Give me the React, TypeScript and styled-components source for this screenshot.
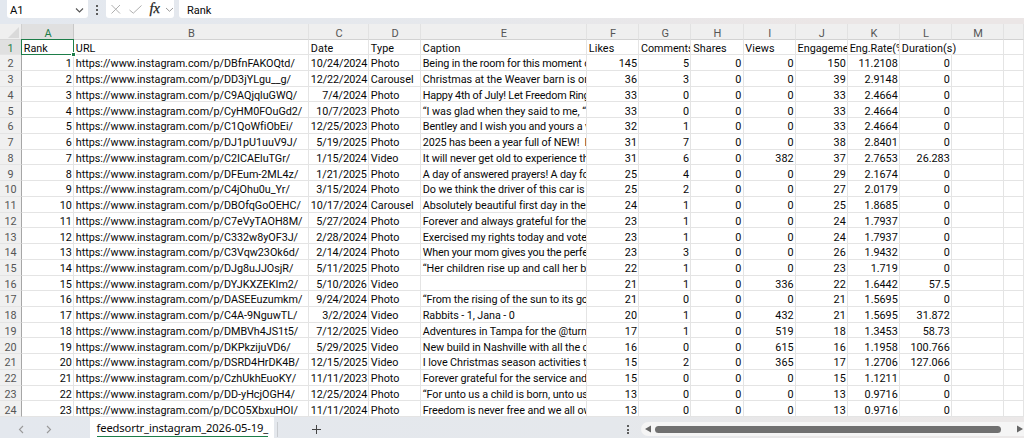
import React from "react";
import styled, { createGlobalStyle } from "styled-components";

const GlobalStyle = createGlobalStyle`
  * { box-sizing: border-box; }
  body { margin: 0; background: #fff; overflow: hidden; }
`;

const SHEET_FONT = `Roboto, "Liberation Sans", sans-serif`;
const UI_FONT = `"Noto Sans", "Open Sans", sans-serif`;
const COLUMNS = "52px 235px 60px 52px 166px 52.2px 52.2px 52.2px 52.2px 52.2px 52px 52px 52px 1fr";

const Workbook = styled.div`
  width: 1024px;
  height: 438px;
  display: flex;
  flex-direction: column;
  overflow: hidden;
  font-family: ${SHEET_FONT};
  color: #080808;
`;

const FormulaBar = styled.header`
  flex: 0 0 24px;
  display: flex;
  align-items: flex-start;
  padding-left: 7px;
  background: linear-gradient(90deg, #e3e8ef 0%, #e6e8ec 45%, #ebe6e6 80%, #ebe6e6 100%);
  font-size: 11px;
`;

const NameBox = styled.div`
  width: 81px;
  height: 18px;
  padding: 2px 4px 0 3px;
  display: flex;
  align-items: center;
  justify-content: space-between;
  background: #fff;
  border-radius: 0 0 3px 3px;
  letter-spacing: -0.2px;
  font-size: 11.3px;
`;

const Grip = styled.div`
  width: 17.5px;
  height: 19px;
  display: flex;
  flex-direction: column;
  align-items: center;
  justify-content: center;
  gap: 2px;
`;

const Dot = styled.i`
  width: 2px;
  height: 2px;
  background: #5c5c5c;
`;

const FormulaTools = styled.div`
  width: 68.5px;
  height: 18px;
  display: flex;
  align-items: center;
  background: #fff;
  border-radius: 0 0 3px 3px;
`;

const FormulaInput = styled.div`
  flex: 1;
  height: 18px;
  margin-left: 5px;
  padding: 2px 0 0 8px;
  display: flex;
  align-items: center;
  background: #fff;
  border-radius: 0 0 0 3px;
`;

const Sheet = styled.main`
  flex: 0 0 393.4px;
  display: flex;
  flex-direction: column;
  overflow: hidden;
  background: #fff;
`;

const Row = styled.div`
  flex: 0 0 15.745px;
  height: 15.745px;
  display: flex;
`;

const HeaderRow = styled(Row)`
  flex-basis: 15.5px;
  height: 15.5px;
  background: #efefef;
`;

const Corner = styled.div`
  width: 22px;
  display: flex;
  align-items: flex-end;
  justify-content: flex-end;
  padding: 0 2px 1px 0;
  border-right: 1px solid #d0d0d0;
  border-bottom: 1px solid #d6d6d6;
`;

const Cells = styled.div`
  flex: 1;
  display: grid;
  grid-template-columns: ${COLUMNS};
  grid-template-rows: 100%;
`;

const ColumnHead = styled.div<{ $active?: boolean }>`
  display: flex;
  align-items: center;
  justify-content: center;
  padding: 4px 0 0 1px;
  font-size: 11px;
  line-height: 11px;
  color: ${(p) => (p.$active ? "#1d7d49" : "#555")};
  background: ${(p) => (p.$active ? "#e0e0e0" : "transparent")};
  border-right: 1px solid ${(p) => (p.$active ? "#c8c8c8" : "#e2e2e2")};
  border-bottom: 1px solid #d2d2d2;
`;

const RowHead = styled.div<{ $active?: boolean }>`
  width: 22px;
  display: flex;
  align-items: flex-start;
  justify-content: center;
  padding-top: 3.2px;
  font-size: 10.8px;
  line-height: 12.7px;
  color: ${(p) => (p.$active ? "#1d7d49" : "#555")};
  background: ${(p) => (p.$active ? "#e0e0e0" : "#f0f0f0")};
  border-right: 1px solid #a6a6a6;
  border-bottom: 1px solid #e4e4e4;
`;

const Cell = styled.div<{ $right?: boolean; $spill?: boolean; $track?: number }>`
  min-width: 0;
  padding: 3.2px 1.2px 0 1.8px;
  overflow: ${(p) => (p.$spill ? "visible" : "hidden")};
  white-space: pre;
  text-align: ${(p) => (p.$right ? "right" : "left")};
  font-size: 10.8px;
  line-height: 12.7px;
  letter-spacing: ${(p) => p.$track ?? 0}px;
  border-right: 1px solid ${(p) => (p.$spill ? "transparent" : "#e4e4e4")};
  border-bottom: 1px solid #e4e4e4;
`;

const SelectedCell = styled(Cell)`
  position: relative;
  overflow: visible;
  &::before {
    content: "";
    position: absolute;
    inset: -1px -1px -1px -1px;
    border: 1px solid #1d7d49;
  }
  &::after {
    content: "";
    position: absolute;
    right: -2px;
    bottom: -2px;
    width: 3px;
    height: 3px;
    background: #1d7d49;
    outline: 1px solid #fff;
  }
`;

const Footer = styled.footer`
  flex: 1;
  display: flex;
  align-items: flex-start;
  background: linear-gradient(90deg, #e4e8ee 0%, #e5e8ec 60%, #e9e7e7 80%, #ebe8e8 100%);
`;

const SheetNav = styled.nav`
  width: 90px;
  height: 21px;
  padding: 3px 0 0 17px;
  display: flex;
  align-items: center;
  gap: 17.5px;
`;

const Tab = styled.div`
  width: 184px;
  height: 21px;
  padding: 3px 6.5px 0;
  background: #fff;
`;

const TabLabel = styled.div`
  height: 17px;
  border-bottom: 1px solid #1d7d49;
  font: 11.2px/15px ${UI_FONT};
  letter-spacing: -0.13px;
  white-space: nowrap;
`;

const TabDivider = styled.i`
  width: 1px;
  height: 15px;
  margin: 5px 0 0 3px;
  background: #c9ccd0;
`;

const AddSheet = styled.div`
  flex: 1;
  padding: 7px 0 0 33px;
  line-height: 0;
`;

const FooterGrip = styled(Grip)`
  width: 8px;
  height: 17px;
  margin: 4px 9px 0 0;
  gap: 1.5px;
`;

const ScrollBar = styled.div`
  width: 383px;
  height: 14px;
  margin-top: 5px;
  padding: 0 1px 0 4px;
  display: flex;
  align-items: center;
  background: #f5f5f5;
  border-radius: 7px 0 0 7px;
`;

const Thumb = styled.div`
  width: 346px;
  height: 7px;
  margin: 0 16px 0 4px;
  background: #707070;
  border-radius: 4px;
`;

const Chevron = ({ color = "#555", size = 9, d = "M1 2.5 4.5 6 8 2.5" }) => (
  <svg width={size} height={size} viewBox="0 0 9 9" fill="none" stroke={color} strokeWidth="1.1">
    <path d={d} />
  </svg>
);

const FormulaIcons = () => (
  <svg width="68" height="18" viewBox="0 0 68 18" fill="none" strokeWidth="1">
    <path d="M5.5 5 14 13.5M14 5 5.5 13.5" stroke="#b0b0b0" />
    <path d="M23.5 10 27.3 13.2 35.5 5.5" stroke="#b0b0b0" />
    <text x="43.5" y="13" fontFamily="Liberation Serif, serif" fontStyle="italic" fontSize="14.5" fill="#222" stroke="#222" strokeWidth="0.25">
      fx
    </text>
    <path d="M60 8 63.5 11.3 67 8" stroke="#999" />
  </svg>
);

const HEADERS = ["Rank", "URL", "Date", "Type", "Caption", "Likes", "Comments", "Shares", "Views", "Engagement", "Eng.Rate(%)", "Duration(s)"];

const HEADER_TRACKING: Record<string, number> = { Comments: -0.05, Engagement: 0, "Eng.Rate(%)": -0.03 };

type Post = [string, string, string, string, number, number, number, number, string, string, number?];

const POSTS: Post[] = [
  ["DBfnFAKOQtd", "10/24/2024", "Photo", "Being in the room for this moment of", 145, 5, 0, 150, "11.2108", "0", -0.15],
  ["DD3jYLgu__g", "12/22/2024", "Carousel", "Christmas at the Weaver barn is one", 36, 3, 0, 39, "2.9148", "0", 0],
  ["C9AQjqluGWQ", "7/4/2024", "Photo", "Happy 4th of July! Let Freedom Ring", 33, 0, 0, 33, "2.4664", "0", -0.2],
  ["CyHM0FOuGd2", "10/7/2023", "Photo", "“I was glad when they said to me, “", 33, 0, 0, 33, "2.4664", "0", -0.06],
  ["C1QoWfiObEi", "12/25/2023", "Photo", "Bentley and I wish you and yours a very", 32, 1, 0, 33, "2.4664", "0", -0.14],
  ["DJ1pU1uuV9J", "5/19/2025", "Photo", "2025 has been a year full of NEW!  I", 31, 7, 0, 38, "2.8401", "0", -0.14],
  ["C2ICAEluTGr", "1/15/2024", "Video", "It will never get old to experience the", 31, 6, 382, 37, "2.7653", "26.283"],
  ["DFEum-2ML4z", "1/21/2025", "Photo", "A day of answered prayers! A day for", 25, 4, 0, 29, "2.1674", "0", -0.16],
  ["C4jOhu0u_Yr", "3/15/2024", "Photo", "Do we think the driver of this car is", 25, 2, 0, 27, "2.0179", "0", -0.09],
  ["DBOfqGoOEHC", "10/17/2024", "Carousel", "Absolutely beautiful first day in the", 24, 1, 0, 25, "1.8685", "0"],
  ["C7eVyTAOH8M", "5/27/2024", "Photo", "Forever and always grateful for the", 23, 1, 0, 24, "1.7937", "0"],
  ["C332w8yOF3J", "2/28/2024", "Photo", "Exercised my rights today and vote", 23, 1, 0, 24, "1.7937", "0"],
  ["C3Vqw23Ok6d", "2/14/2024", "Photo", "When your mom gives you the perfe", 23, 3, 0, 26, "1.9432", "0", -0.2],
  ["DJg8uJJOsjR", "5/11/2025", "Photo", "“Her children rise up and call her b", 22, 1, 0, 23, "1.719", "0", 0],
  ["DYJKXZEKIm2", "5/10/2026", "Video", "", 21, 1, 336, 22, "1.6442", "57.5"],
  ["DASEEuzumkm", "9/24/2024", "Photo", "“From the rising of the sun to its go", 21, 0, 0, 21, "1.5695", "0"],
  ["C4A-9NguwTL", "3/2/2024", "Video", "Rabbits - 1, Jana - 0", 20, 1, 432, 21, "1.5695", "31.872"],
  ["DMBVh4JS1t5", "7/12/2025", "Video", "Adventures in Tampa for the @turn", 17, 1, 519, 18, "1.3453", "58.73"],
  ["DKPkzijuVD6", "5/29/2025", "Video", "New build in Nashville with all the c", 16, 0, 615, 16, "1.1958", "100.766"],
  ["DSRD4HrDK4B", "12/15/2025", "Video", "I love Christmas season activities t", 15, 2, 365, 17, "1.2706", "127.066"],
  ["CzhUkhEuoKY", "11/11/2023", "Photo", "Forever grateful for the service and", 15, 0, 0, 15, "1.1211", "0"],
  ["DD-yHcjOGH4", "12/25/2024", "Photo", "“For unto us a child is born, unto us", 13, 0, 0, 13, "0.9716", "0"],
  ["DCO5XbxuHOI", "11/11/2024", "Photo", "Freedom is never free and we all ow", 13, 0, 0, 13, "0.9716", "0"],
];

export default function App() {
  return (
    <Workbook>
      <GlobalStyle />
      <FormulaBar>
        <NameBox>
          A1
          <Chevron />
        </NameBox>
        <Grip>
          <Dot />
          <Dot />
          <Dot />
        </Grip>
        <FormulaTools>
          <FormulaIcons />
        </FormulaTools>
        <FormulaInput>Rank</FormulaInput>
      </FormulaBar>

      <Sheet>
        <HeaderRow>
          <Corner>
            <svg width="11" height="11" viewBox="0 0 11 11">
              <path d="M11 0V11H0Z" fill="#dadada" />
            </svg>
          </Corner>
          <Cells>
            {"ABCDEFGHIJKLM".split("").map((c) => (
              <ColumnHead key={c} $active={c === "A"}>
                {c}
              </ColumnHead>
            ))}
            <ColumnHead />
          </Cells>
        </HeaderRow>
        <Row>
          <RowHead $active>1</RowHead>
          <Cells>
            {HEADERS.map((h, i) =>
              i === 0 ? (
                <SelectedCell key={h}>{h}</SelectedCell>
              ) : (
                <Cell key={h} $spill={h === "Duration(s)"} $track={HEADER_TRACKING[h] ?? 0.08}>
                  {h}
                </Cell>
              ),
            )}
            <Cell />
            <Cell />
          </Cells>
        </Row>
        {POSTS.map(([id, date, type, caption, likes, comments, views, engagement, rate, duration, tracking = -0.08], i) => (
          <Row key={id}>
            <RowHead>{i + 2}</RowHead>
            <Cells>
              <Cell $right>{i + 1}</Cell>
              <Cell $track={-0.03}>{`https://www.instagram.com/p/${id}/`}</Cell>
              <Cell $right $track={-0.1}>{date}</Cell>
              <Cell $track={0.05}>{type}</Cell>
              <Cell $track={tracking}>{caption}</Cell>
              <Cell $right>{likes}</Cell>
              <Cell $right>{comments}</Cell>
              <Cell $right>0</Cell>
              <Cell $right>{views}</Cell>
              <Cell $right>{engagement}</Cell>
              <Cell $right>{rate}</Cell>
              <Cell $right>{duration}</Cell>
              <Cell />
              <Cell />
            </Cells>
          </Row>
        ))}
      </Sheet>

      <Footer>
        <SheetNav>
          <Chevron color="#999" d="M6 1 2.5 4.5 6 8" />
          <Chevron color="#999" d="M3 1 6.5 4.5 3 8" />
        </SheetNav>
        <Tab>
          <TabLabel>feedsortr_instagram_2026-05-19_</TabLabel>
        </Tab>
        <TabDivider />
        <AddSheet>
          <svg width="11" height="11" viewBox="0 0 11 11" stroke="#444" strokeWidth="1">
            <path d="M5.5 1V10M1 5.5H10" />
          </svg>
        </AddSheet>
        <FooterGrip>
          <Dot />
          <Dot />
          <Dot />
        </FooterGrip>
        <ScrollBar>
          <svg width="6" height="8" viewBox="0 0 6 8">
            <path d="M6 0.5V7.5L0 4Z" fill="#666" />
          </svg>
          <Thumb />
          <svg width="6" height="8" viewBox="0 0 6 8">
            <path d="M0 0.5V7.5L6 4Z" fill="#666" />
          </svg>
        </ScrollBar>
      </Footer>
    </Workbook>
  );
}
